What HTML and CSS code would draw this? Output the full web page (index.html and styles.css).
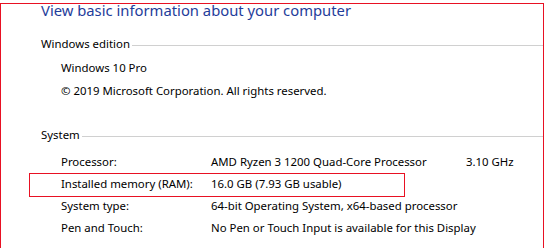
FILE: index.html
```html
<!DOCTYPE html>
<html lang="en">
<head>
    <meta charset="UTF-8">
    <meta name="viewport" content="width=device-width, initial-scale=1.0">
    <title>System</title>
    <link rel="stylesheet" href="styles.css">
</head>
<body>
    <div class="frame">
        <h1 class="title">View basic information about your computer</h1>

        <div class="section-head edition-head">
            <span>Windows edition</span>
            <div class="rule"></div>
        </div>
        <div class="edition">
            <div>Windows 10 Pro</div>
            <div>&copy; 2019 Microsoft Corporation. All rights reserved.</div>
        </div>

        <div class="section-head system-head">
            <span>System</span>
            <div class="rule"></div>
        </div>
        <div class="specs">
            <div class="label">Processor:</div>
            <div class="value">AMD Ryzen 3 1200 Quad-Core Processor</div>
            <div class="extra">3.10 GHz</div>

            <div class="label">Installed memory (RAM):</div>
            <div class="value">16.0 GB (7.93 GB usable)</div>
            <div class="extra"></div>

            <div class="label">System type:</div>
            <div class="value">64-bit Operating System, x64-based processor</div>
            <div class="extra"></div>

            <div class="label">Pen and Touch:</div>
            <div class="value">No Pen or Touch Input is available for this Display</div>
            <div class="extra"></div>
        </div>

        <!-- highlight round the RAM row -->
        <div class="highlight"></div>
    </div>
</body>
</html>
```

FILE: styles.css
```css
body{
    margin: 0;
    padding-top: 3px;
    background: #fff;
    font-family: "Noto Sans", "Open Sans", sans-serif;
    font-size: 11.4px;
    color: #000;
    overflow: hidden;
}
.frame{
    position: relative;
    height: 244px;
    margin-right: 1px;
    border: 1px solid #e81123;
    border-bottom: none;
    padding-left: 40px;
}
.title{
    margin: -4px 0 0 0;
    font-size: 14.8px;
    font-weight: normal;
    line-height: 20px;
    color: #1f3d9b;
}
.section-head{
    display: flex;
    align-items: center;
    line-height: 16px;
}
.section-head .rule{
    flex: 1;
    height: 1px;
    margin-left: 2px;
    margin-top: 2px;
    background: #d0d0d0;
}
.edition-head{
    margin-top: 16px;
}
.edition{
    margin-top: 4px;
    padding-left: 20px;
    line-height: 23px;
}
.system-head{
    margin-top: 25px;
}
.specs{
    margin-top: 7px;
    padding-left: 20px;
    display: grid;
    grid-template-columns: 150px 255px auto;
    grid-auto-rows: 22px;
    align-items: center;
    white-space: nowrap;
}
.highlight{
    position: absolute;
    left: 28px;
    top: 169px;
    width: 374px;
    height: 22px;
    border: 1px solid #e81123;
}
```
